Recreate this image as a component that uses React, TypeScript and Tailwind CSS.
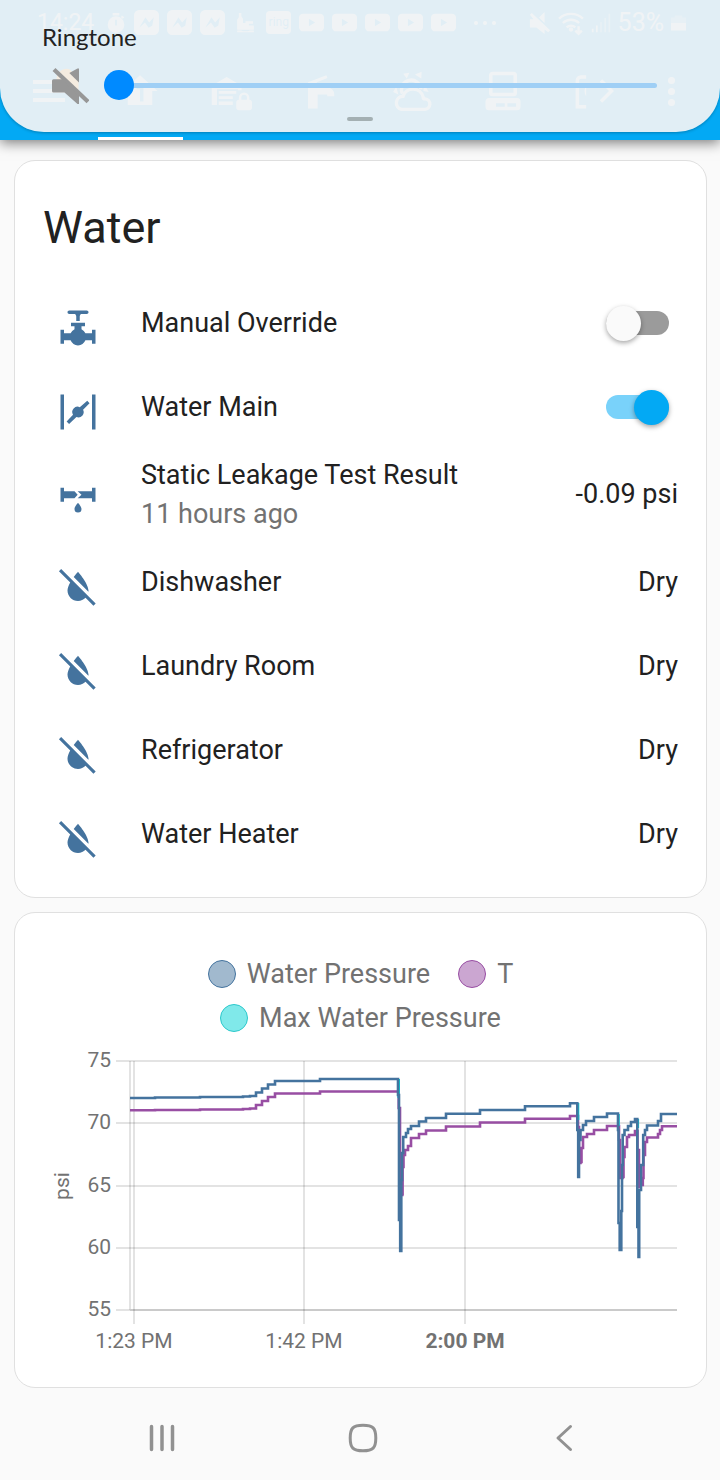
import { useState, type ReactNode } from "react";

function Svg({ className = "size-[42px]", children }: { className?: string; children: ReactNode }) {
  return (
    <svg viewBox="0 0 24 24" fill="currentColor" aria-hidden="true" className={`shrink-0 ${className}`}>
      {children}
    </svg>
  );
}

/* ---------- entity icons ---------- */

const PipeValve = () => (
  <Svg>
    <path d="M22 13v8h-2v-2h-3.76A5.02 5.02 0 0 1 12 22a5.02 5.02 0 0 1-4.24-3H4v2H2v-8h2v2h3.76A5 5 0 0 1 10 12.7V11H8V9h8v2h-2v1.7a5 5 0 0 1 2.24 2.3H20v-2h2M17 2H7c-.55 0-1 .45-1 1s.45 1 1 1h3.3c.4.4.7.9.7 1.500V8h2V5.500c0-.6.3-1.100.7-1.500H17c.55 0 1-.45 1-1s-.45-1-1-1Z" />
  </Svg>
);

const Valve = () => (
  <Svg>
    <path d="M2 2h2v20H2zM20 2h2v20h-2zM17.300 5.600 18.600 7 14.900 10.700A3 3 0 0 1 11.100 14.850L6.900 18.800 5.500 17.400 9.150 13.500A3 3 0 0 1 13 9.250Z" />
  </Svg>
);

const PipeLeak = () => (
  <Svg>
    <path d="M2 5h2v2h6l1.800 2L10 11H4v2H2zM22 5v8h-2v-2h-8.200l2.200-2-2.200-2H20V5zM12 13.500s2 2.200 2 3.600a2 2 0 0 1-4 0c0-1.400 2-3.600 2-3.600Z" />
  </Svg>
);

const WaterOff = () => (
  <Svg>
    <path d="M20.840 22.730 16.290 18.180C15.200 19.300 13.690 20 12 20c-3.310 0-6-2.690-6-6 0-1.330.67-2.970 1.550-4.560L1.110 3l1.280-1.270 19.720 19.730-1.270 1.270M18 14c0-4-6-10.750-6-10.750s-1.160 1.300-2.450 3.100l8.400 8.400c.05-.25.05-.51.05-.75Z" />
  </Svg>
);

/* ---------- toolbar icons ---------- */

const HomeFloor = () => (
  <Svg>
    <path fillRule="evenodd" d="M12 3 2 12h3v8h14v-8h3ZM10 9h4v9h-2v-7h-2Z" />
  </Svg>
);

const GarageLock = () => (
  <Svg>
    <path d="M1 20V9l8.500-5L18 9v2.500h-2V11H4v9ZM5 12h10v1.500H5zM5 15h8v1.500H5zM5 18h8v2H5zM22.500 17v-1.200a3 3 0 0 0-6 0V17c-.8 0-1.500.6-1.500 1.400v3.200c0 .8.7 1.400 1.500 1.400h6c.8 0 1.500-.6 1.500-1.400v-3.200c0-.8-.7-1.400-1.500-1.400m-1.400 0h-3.200v-1.200a1.600 1.600 0 0 1 3.200 0Z" />
  </Svg>
);

const Faucet = () => (
  <Svg>
    <path d="M4 7 14.500 3l.6 1.500L9 7v3h6a4 4 0 0 1 4 4v1h-4v-1H9.500v8H4Z" />
  </Svg>
);

const PartlyCloudy = () => (
  <Svg>
    <path d="M10.500 1.500 7 2.200l2 2.700ZM17.500 1l-3.800 1.600 3.600 2.200ZM3 9.500l-1.800 3 3 1.500ZM19 8l2.500 4.500-3-.5Z" />
    <g fill="none" stroke="currentColor" strokeWidth="1.900">
      <path d="M6.500 13.500a5.500 5.500 0 1 1 10.500-2.500" />
      <path d="M6 22.500h13a3 3 0 0 0 .4-6 1 1 0 0 1-1-1 6 6 0 0 0-11.500-.5A3.800 3.800 0 0 0 6 22.500Z" />
    </g>
  </Svg>
);

const Desktop = () => (
  <Svg>
    <path
      fillRule="evenodd"
      d="M6 1h12a2 2 0 0 1 2 2v10a2 2 0 0 1-2 2H6a2 2 0 0 1-2-2V3c0-1.100.9-2 2-2m0 2v10h12V3ZM4 16h16a2 2 0 0 1 2 2v3a2 2 0 0 1-2 2H4a2 2 0 0 1-2-2v-3c0-1.100.9-2 2-2m4 3v2h5v-2Zm6.500 0v2h5v-2Z"
    />
  </Svg>
);

const ExitArrow = () => (
  <Svg>
    <g fill="none" stroke="currentColor" strokeWidth="2">
      <path d="M7.500 4H4.500a2 2 0 0 0-2 2v15h5" />
      <path d="m16 6 6 6-6 6" />
    </g>
    <path d="M7.500 9v6c-1.200-2-1.200-4 0-6Z" />
  </Svg>
);

/* ---------- status bar icons ---------- */

const Timer = () => (
  <Svg className="size-[20px]">
    <path fillRule="evenodd" d="M8 0h8v3H8zM12 4a10 10 0 1 0 0 20 10 10 0 0 0 0-20m-1 4h2v7h-2ZM19 3l3 2-2 2-2-2Z" />
  </Svg>
);

const Messenger = () => (
  <Svg className="size-[25px]">
    <path
      fillRule="evenodd"
      d="M5 0h14a5 5 0 0 1 5 5v14a5 5 0 0 1-5 5H5a5 5 0 0 1-5-5V5a5 5 0 0 1 5-5m0 17 6-10 3.500 5L19 7l-1.500 8-3.500 2-3.500-5Z"
    />
  </Svg>
);

const Boat = () => (
  <Svg className="h-[20px] w-[25px]">
    <path d="M4 0h3v4l2 3v5h3v-2h9v3h-5v2h6v5H2V8l2-3zM2 21h5l2 1h6l2-1h5v2H2z" />
  </Svg>
);

const Video = () => (
  <Svg className="size-[25px]">
    <path
      fillRule="evenodd"
      d="M4 3.500h16a4 4 0 0 1 4 4v9a4 4 0 0 1-4 4H4a4 4 0 0 1-4-4v-9a4 4 0 0 1 4-4M9.500 8.500v7l6-3.500Z"
    />
  </Svg>
);

const MutedSmall = () => (
  <Svg className="size-[22px]">
    <path d="M1 8h4L1 3l2-2 20 19-2 2-4-3v5l-9-7H1ZM11 6l6-6v12Z" />
  </Svg>
);

const Wifi = () => (
  <Svg className="size-[26px]">
    <g fill="none" stroke="currentColor" strokeWidth="2.200">
      <path d="M1 8a16 16 0 0 1 22 0M4.500 12a11 11 0 0 1 15 0M8 16a6 6 0 0 1 8 0" />
      <path d="M19 15v7m-3-3 3 3 3-3" />
    </g>
    <circle cx="12" cy="18" r="2" />
  </Svg>
);

const Signal = () => (
  <Svg className="size-[20px]">
    <path d="M1 19h2v4H1zM6 15h2v8H6z" />
    <path opacity=".5" d="M11 11h2v12h-2zM16 6h2v17h-2zM21 1h2v22h-2z" />
  </Svg>
);

const Battery = () => (
  <Svg className="h-[22px] w-[15px]">
    <path d="M0 12h24v12H0z" />
    <path opacity=".4" d="M6 0h12v3h6v9H0V3h6z" />
  </Svg>
);

function StatusBar() {
  return (
    <div className="flex h-[42px] items-center justify-between pr-[34px] pl-[37px] pt-[3px] text-white">
      <div className="flex items-center gap-[8px]">
        <span className="mr-[4px] text-[23px] leading-6">14:24</span>
        <Timer />
        <Messenger />
        <Messenger />
        <Messenger />
        <Boat />
        <span className="w-[25px] rounded-[4px] bg-white text-center text-[12px] leading-[23px] text-[#03a9f4]">ring</span>
        <Video />
        <Video />
        <Video />
        <Video />
        <Video />
        <span className="ml-[10px] flex gap-[5px]">
          <i className="size-[4px] rounded-full bg-white" />
          <i className="size-[4px] rounded-full bg-white" />
          <i className="size-[4px] rounded-full bg-white" />
        </span>
      </div>
      <div className="flex items-center gap-[7px]">
        <MutedSmall />
        <Wifi />
        <Signal />
        <span className="text-[25px] leading-6">53%</span>
        <Battery />
      </div>
    </div>
  );
}

const tabs: { label: string; icon: () => ReactNode }[] = [
  { label: "Home", icon: HomeFloor },
  { label: "Garage", icon: GarageLock },
  { label: "Water", icon: Faucet },
  { label: "Weather", icon: PartlyCloudy },
  { label: "Computers", icon: Desktop },
  { label: "Exit", icon: ExitArrow },
];

function Toolbar() {
  return (
    <div className="flex h-[98px] items-center text-white">
      <button aria-label="Menu" className="flex w-[95px] shrink-0 flex-col gap-[5px] pl-[33px]">
        <i className="h-[4px] w-[32px] bg-white" />
        <i className="h-[4px] w-[32px] bg-white" />
        <i className="h-[4px] w-[32px] bg-white" />
      </button>
      <nav className="grid h-full flex-1 grid-cols-6">
        {tabs.map(({ label, icon: Icon }, i) => (
          <button
            key={label}
            aria-label={label}
            className={`mx-[3px] flex items-center justify-center border-b-[3px] pt-[3px] ${
              i === 0 ? "border-white" : "border-transparent"
            }`}
          >
            <Icon />
          </button>
        ))}
      </nav>
      <button aria-label="More" className="flex w-[81px] shrink-0 flex-col gap-[4px] pl-[29px]">
        <i className="size-[7px] rounded-full bg-white" />
        <i className="size-[7px] rounded-full bg-white" />
        <i className="size-[7px] rounded-full bg-white" />
      </button>
    </div>
  );
}

function VolumePanel() {
  const [volume, setVolume] = useState(0);
  return (
    <div className="absolute inset-x-0 top-0 flex h-[132px] flex-col rounded-b-[44px] bg-[#eff2f4]/94 pt-[23px] shadow-[0_1px_3px_rgba(0,0,0,0.25)]">
      <label htmlFor="ringtone" className="pl-[42px] font-['Lato',sans-serif] text-[24px] leading-[28px] text-[#222]">
        Ringtone
      </label>
      <div className="flex items-center pt-[16px] pr-[63px] pl-[52px]">
        <svg viewBox="0 0 37 37" className="mr-[15px] size-[37px] shrink-0" aria-hidden="true">
          <path fill="#f5ece0" d="M4.500 12.300a10 10 0 0 1 13-10l9 9V24Z" />
          <g fill="#979797">
            <path d="M1.500 12.300H12L27 26.500V37h-1.500L12.500 25.500H1.500A1.500 1.500 0 0 1 0 24V13.800A1.500 1.500 0 0 1 1.500 12.300Z" />
            <path d="M17.300 6 25.500 1.500H27V15.500Z" />
            <path d="M2 2.500 36 34.800" stroke="#979797" strokeWidth="4.200" />
          </g>
        </svg>
        <input
          id="ringtone"
          type="range"
          min={0}
          max={15}
          value={volume}
          onChange={(e) => setVolume(Number(e.target.value))}
          className="h-[30px] min-w-0 flex-1 cursor-pointer appearance-none bg-transparent [&::-webkit-slider-runnable-track]:h-[5px] [&::-webkit-slider-runnable-track]:rounded-full [&::-webkit-slider-runnable-track]:bg-[#9fcff5] [&::-webkit-slider-thumb]:-mt-[13px] [&::-webkit-slider-thumb]:size-[30px] [&::-webkit-slider-thumb]:appearance-none [&::-webkit-slider-thumb]:rounded-full [&::-webkit-slider-thumb]:bg-[#008aff]"
        />
      </div>
      <span className="mx-auto mt-[13px] h-[4px] w-[26px] rounded-full bg-[#a4b0b3]" />
    </div>
  );
}

/* ---------- entities card ---------- */

function EntityRow({
  icon,
  name,
  detail,
  htmlFor,
  children,
}: {
  icon: ReactNode;
  name: string;
  detail?: string;
  htmlFor?: string;
  children: ReactNode;
}) {
  return (
    <li className="flex min-h-[70px] items-center pl-[14px] text-[27px] leading-[39px]">
      <span className="mt-[10px] text-[#44739e]">{icon}</span>
      <div className="ml-[42px] min-w-0 flex-1">
        {htmlFor ? <label htmlFor={htmlFor}>{name}</label> : <p>{name}</p>}
        {detail && <p className="leading-[38px] text-[#727272]">{detail}</p>}
      </div>
      {children}
    </li>
  );
}

function Toggle({ id, initial }: { id: string; initial: boolean }) {
  const [on, setOn] = useState(initial);
  return (
    <input
      id={id}
      type="checkbox"
      role="switch"
      checked={on}
      onChange={() => setOn(!on)}
      className="relative mr-[9px] h-[24px] w-[63px] shrink-0 cursor-pointer appearance-none rounded-full bg-[#9b9b9b] before:absolute before:-top-[5px] before:left-0 before:size-[35px] before:rounded-full before:bg-[#fafafa] before:shadow-[0_2px_5px_rgba(0,0,0,0.35)] checked:bg-[#79d2fa] checked:before:left-[28px] checked:before:bg-[#03a9f4]"
    />
  );
}

const leakSensors = ["Dishwasher", "Laundry Room", "Refrigerator", "Water Heater"];

function WaterCard() {
  return (
    <section className="rounded-[21px] border border-[#e0e0e0] bg-white px-[28px] pt-[31px] pb-[28px]">
      <h1 className="text-[45px] leading-[72px]">Water</h1>
      <ul className="mt-[24px] flex flex-col gap-[14px]">
        <EntityRow icon={<PipeValve />} name="Manual Override" htmlFor="manual-override">
          <Toggle id="manual-override" initial={false} />
        </EntityRow>
        <EntityRow icon={<Valve />} name="Water Main" htmlFor="water-main">
          <Toggle id="water-main" initial={true} />
        </EntityRow>
        <EntityRow icon={<PipeLeak />} name="Static Leakage Test Result" detail="11 hours ago">
          <span>-0.09 psi</span>
        </EntityRow>
        {leakSensors.map((name) => (
          <EntityRow key={name} icon={<WaterOff />} name={name}>
            <span>Dry</span>
          </EntityRow>
        ))}
      </ul>
    </section>
  );
}

/* ---------- history chart ---------- */

type Point = [number, number];

const pressure: Point[] = [
  [130, 1098], [155, 1097.5], [200, 1097], [243, 1096.5], [250, 1096], [256, 1092.5], [262, 1088.5],
  [268, 1084.5], [275, 1081], [320, 1079], [398, 1095], [399, 1220], [400.200, 1251], [401.300, 1180],
  [402, 1153], [403.200, 1137], [406, 1133], [408, 1129], [411, 1126], [419, 1121.5], [426, 1118],
  [446, 1113.8], [480, 1110], [525, 1106.300], [570, 1103.200], [577.300, 1130], [578.200, 1177], [579, 1140],
  [580.500, 1130], [583, 1125], [586, 1121], [594, 1117], [607, 1113.5], [618, 1130], [618.500, 1223],
  [619.700, 1250], [621.300, 1211], [622, 1165], [622.700, 1135], [624.500, 1130], [628, 1126], [631, 1122],
  [635, 1119], [637.300, 1227], [638.500, 1257], [639.200, 1190], [641, 1165], [643.200, 1135], [645, 1130],
  [647, 1125.500], [658, 1121], [661, 1114], [677, 1114],
];

const threshold: Point[] = [
  [130, 1110.300], [155, 1110], [200, 1109.500], [243, 1109], [250, 1108.500], [256, 1105], [262, 1101],
  [268, 1097], [275, 1093.5], [320, 1091.500], [398.700, 1108], [400, 1195], [402.300, 1194], [402.600, 1167],
  [403.500, 1155], [405, 1150], [408, 1146], [411, 1138], [419, 1134], [426, 1130.5], [446, 1126.500],
  [480, 1122.5], [525, 1118.800], [570, 1116], [578, 1127], [579, 1163], [580.500, 1162], [581.500, 1148],
  [583, 1137], [587, 1134], [594, 1130], [607, 1126], [619, 1140], [620, 1178], [622.500, 1177],
  [623.500, 1157], [624.500, 1147], [627, 1137], [629, 1135], [635, 1131], [637.500, 1150], [639, 1187],
  [640.500, 1185], [642.800, 1178], [643.500, 1155], [645, 1142], [647, 1137.500], [658, 1134], [660, 1130],
  [662, 1126.300], [677, 1126.300],
];

const maximum = "M398.700 1079V1098M578 1103V1120M618.500 1114V1126M637.800 1119V1128";

const steps = (points: Point[]) =>
  points.map(([x, y], i) => (i === 0 ? `M${x} ${y}` : `H${x}V${y}`)).join("");

const yTicks: [string, number][] = [["75", 1061], ["70", 1123], ["65", 1186], ["60", 1248], ["55", 1310]];
const xTicks: [string, number][] = [["1:23 PM", 134], ["1:42 PM", 304], ["2:00 PM", 465]];

const legend = [
  { label: "Water Pressure", swatch: "border-[#44739e] bg-[#a1b9ce]" },
  { label: "T", swatch: "border-[#984ea3] bg-[#cba6d1]" },
  { label: "Max Water Pressure", swatch: "border-[#2cc8cb] bg-[#80e9ea]" },
];

function HistoryCard() {
  return (
    <section className="mt-[14px] rounded-[21px] border border-[#e0e0e0] bg-white px-[28px] pt-[39px] pb-[30px]">
      <ul className="mx-auto flex max-w-[400px] flex-wrap justify-center gap-x-[28px] text-[27px] leading-[44px] text-[#727272]">
        {legend.map(({ label, swatch }) => (
          <li key={label} className="flex items-center gap-[11px]">
            <span className={`size-[28px] rounded-full border ${swatch}`} />
            {label}
          </li>
        ))}
      </ul>
      <svg viewBox="43 1040 635 317" className="block w-full" role="img" aria-label="Water pressure history in psi">
        <g stroke="#000" strokeOpacity=".11" strokeWidth="2">
          {yTicks.map(([label, y]) => (
            <path key={label} d={`M116 ${y}H677`} />
          ))}
          {xTicks.map(([label, x]) => (
            <path key={label} d={`M${x} 1061V1324`} />
          ))}
          <path d="M130 1061V1310M130 1310H677" />
        </g>
        <g fill="#727272" fontSize="21">
          {yTicks.map(([label, y]) => (
            <text key={label} x="111" y={y + 6} textAnchor="end">
              {label}
            </text>
          ))}
          {xTicks.map(([label, x], i) => (
            <text key={label} x={x} y="1348" textAnchor="middle" fontWeight={i === 2 ? 700 : 400}>
              {label}
            </text>
          ))}
          <text transform="translate(69 1186) rotate(-90)" textAnchor="middle">
            psi
          </text>
        </g>
        <g fill="none" strokeWidth="2.600">
          <path d={steps(threshold)} stroke="#984ea3" />
          <path d={maximum} stroke="#00d2d5" />
          <path d={steps(pressure)} stroke="#44739e" />
        </g>
      </svg>
    </section>
  );
}

function SystemNav() {
  return (
    <nav className="mt-[8px] grid h-[84px] grid-cols-3 place-items-center pr-[55px] pl-[61px] text-[#919191]">
      <button aria-label="Recent apps">
        <svg viewBox="0 0 30 30" className="size-[30px]" fill="none" stroke="currentColor" strokeWidth="3.500" strokeLinecap="round">
          <path d="M4.500 3.500v23M15 3.500v23M25.500 3.500v23" />
        </svg>
      </button>
      <button aria-label="Home">
        <svg viewBox="0 0 30 30" className="size-[30px]" fill="none" stroke="currentColor" strokeWidth="3">
          <path d="M15 2.200C25 2.200 27.800 5 27.800 15S25 27.800 15 27.800 2.200 25 2.200 15 5 2.200 15 2.200Z" />
        </svg>
      </button>
      <button aria-label="Back">
        <svg viewBox="0 0 30 30" className="size-[30px]" fill="none" stroke="currentColor" strokeWidth="3" strokeLinecap="round" strokeLinejoin="round">
          <path d="M21.500 3.500 9 15l12.500 11.500" />
        </svg>
      </button>
    </nav>
  );
}

export default function App() {
  return (
    <div className="min-h-screen bg-[#fafafa] font-['Roboto',sans-serif] text-[#212121]">
      <header className="relative bg-[#03a9f4] shadow-[0_3px_12px_rgba(0,0,0,0.5)]">
        <StatusBar />
        <Toolbar />
        <VolumePanel />
      </header>
      <main className="pt-[20px] pr-[13px] pl-[14px]">
        <WaterCard />
        <HistoryCard />
      </main>
      <SystemNav />
    </div>
  );
}
